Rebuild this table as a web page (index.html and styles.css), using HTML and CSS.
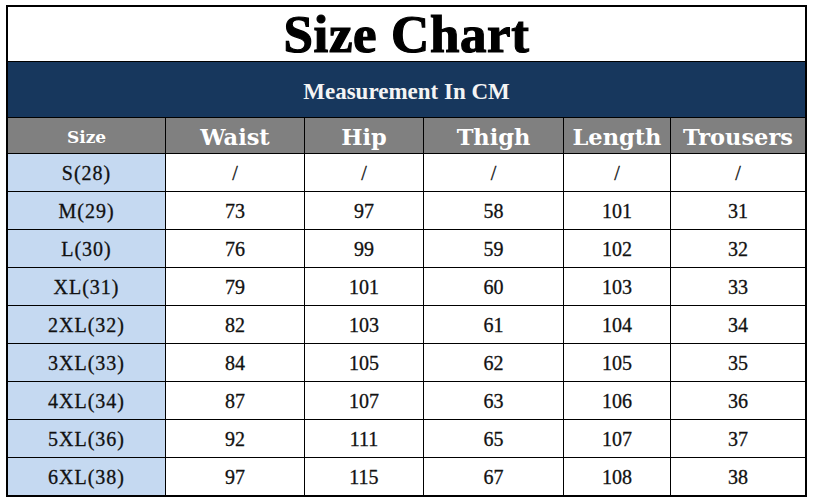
FILE: index.html
```html
<!DOCTYPE html>
<html>
<head>
<meta charset="utf-8">
<link rel="stylesheet" href="styles.css">
</head>
<body>
<div class="sheet">
  <div class="chart">
    <div class="title">Size Chart</div>
    <div class="band">Measurement In CM</div>
    <div class="hd hd-size">Size</div>
    <div class="hd">Waist</div>
    <div class="hd">Hip</div>
    <div class="hd">Thigh</div>
    <div class="hd">Length</div>
    <div class="hd">Trousers</div>

    <div class="sz">S(28)</div><div class="c">/</div><div class="c">/</div><div class="c">/</div><div class="c">/</div><div class="c">/</div>
    <div class="sz">M(29)</div><div class="c">73</div><div class="c">97</div><div class="c">58</div><div class="c">101</div><div class="c">31</div>
    <div class="sz">L(30)</div><div class="c">76</div><div class="c">99</div><div class="c">59</div><div class="c">102</div><div class="c">32</div>
    <div class="sz">XL(31)</div><div class="c">79</div><div class="c">101</div><div class="c">60</div><div class="c">103</div><div class="c">33</div>
    <div class="sz">2XL(32)</div><div class="c">82</div><div class="c">103</div><div class="c">61</div><div class="c">104</div><div class="c">34</div>
    <div class="sz">3XL(33)</div><div class="c">84</div><div class="c">105</div><div class="c">62</div><div class="c">105</div><div class="c">35</div>
    <div class="sz">4XL(34)</div><div class="c">87</div><div class="c">107</div><div class="c">63</div><div class="c">106</div><div class="c">36</div>
    <div class="sz">5XL(36)</div><div class="c">92</div><div class="c">111</div><div class="c">65</div><div class="c">107</div><div class="c">37</div>
    <div class="sz">6XL(38)</div><div class="c">97</div><div class="c">115</div><div class="c">67</div><div class="c">108</div><div class="c">38</div>
  </div>
</div>
</body>
</html>
```
FILE: styles.css
```css
html, body {
  margin: 0;
  padding: 0;
  background: #ffffff;
}
.sheet {
  padding: 5px 0 0 6px;
}
.chart {
  display: grid;
  grid-template-columns: 157px 138px 118px 139px 106px 134px;
  grid-template-rows: 54px 55px 35px repeat(9, 37px);
  gap: 1px;
  background: #000;
  border: 2px solid #000;
  width: max-content;
}
.chart > div {
  display: flex;
  align-items: center;
  justify-content: center;
}
.title {
  grid-column: 1 / -1;
  background: #fff;
  color: #000;
  font-family: "Liberation Serif", serif;
  font-weight: bold;
  font-size: 53px;
  letter-spacing: 0.6px;
  line-height: 1;
  padding-top: 1px;
  box-sizing: border-box;
  -webkit-text-stroke: 1.2px #000;
}
.band {
  grid-column: 1 / -1;
  background: #17375d;
  color: #f4f4f4;
  font-family: "Liberation Serif", serif;
  font-weight: bold;
  font-size: 23px;
  line-height: 1;
  padding-top: 3px;
  box-sizing: border-box;
}
.hd {
  background: #808080;
  color: #ffffff;
  font-family: "DejaVu Serif", serif;
  font-weight: bold;
  font-size: 22.5px;
  line-height: 1;
  padding-top: 3px;
  box-sizing: border-box;
}
.hd-size {
  font-size: 17px;
}
.sz {
  background: #c5d9f1;
  color: #111;
  font-family: "Liberation Serif", serif;
  font-size: 20px;
  letter-spacing: 1px;
  line-height: 1;
  -webkit-text-stroke: 0.3px #111;
}
.c {
  background: #fff;
  color: #111;
  font-family: "Liberation Serif", serif;
  font-size: 20px;
  line-height: 1;
  -webkit-text-stroke: 0.3px #111;
}
```
